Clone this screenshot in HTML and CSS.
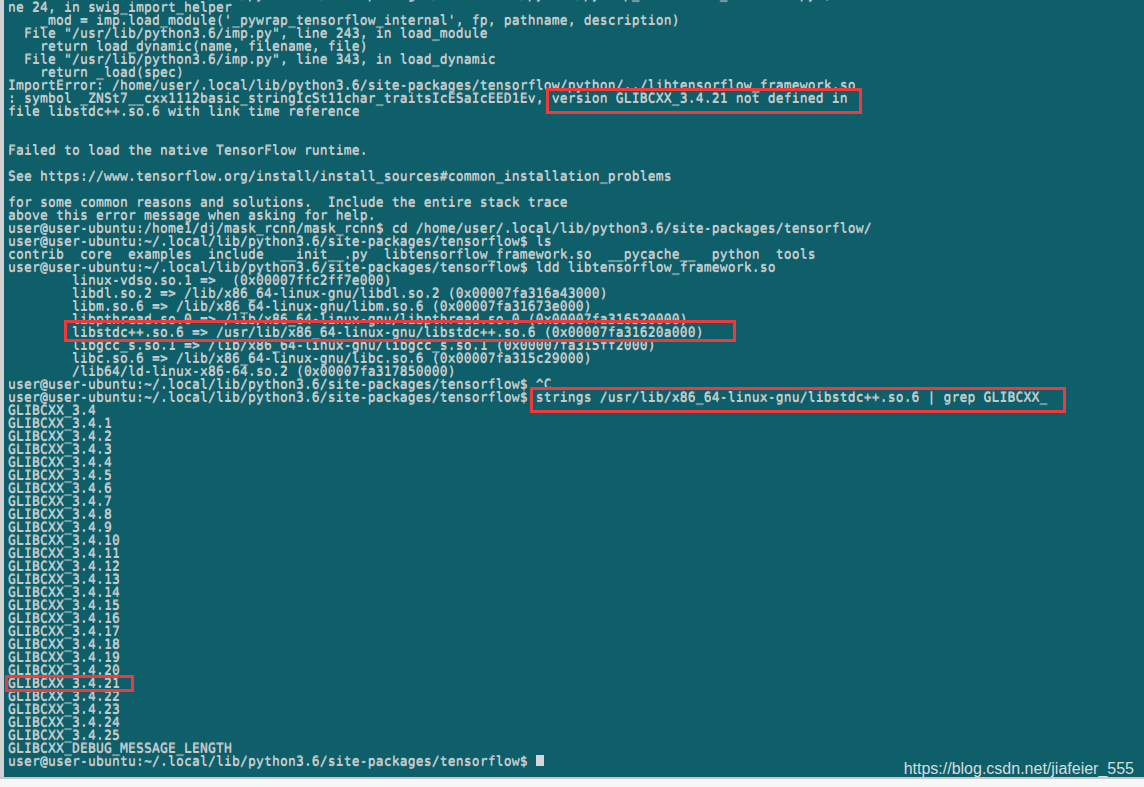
FILE: index.html
```html
<!DOCTYPE html>
<html lang="en">
<head>
  <meta charset="UTF-8">
  <meta name="viewport" content="width=device-width, initial-scale=1.0">
  <title>Terminal - GLIBCXX</title>
  <link rel="stylesheet" href="styles.css">
</head>
<body>

<div class="terminal">
  <div class="output">
    <div class="row">  File "/home/user/.local/lib/python3.6/site-packages/tensorflow/python/pywrap_tensorflow_internal.py", li</div>
    <div class="row">ne 24, in swig_import_helper</div>
    <div class="row">    _mod = imp.load_module('_pywrap_tensorflow_internal', fp, pathname, description)</div>
    <div class="row">  File "/usr/lib/python3.6/imp.py", line 243, in load_module</div>
    <div class="row">    return load_dynamic(name, filename, file)</div>
    <div class="row">  File "/usr/lib/python3.6/imp.py", line 343, in load_dynamic</div>
    <div class="row">    return _load(spec)</div>
    <div class="row">ImportError: /home/user/.local/lib/python3.6/site-packages/tensorflow/python/../libtensorflow_framework.so</div>
    <div class="row">: symbol _ZNSt7__cxx1112basic_stringIcSt11char_traitsIcESaIcEED1Ev, version GLIBCXX_3.4.21 not defined in</div>
    <div class="row">file libstdc++.so.6 with link time reference</div>
    <div class="row"></div>
    <div class="row"></div>
    <div class="row">Failed to load the native TensorFlow runtime.</div>
    <div class="row"></div>
    <div class="row">See https://www.tensorflow.org/install/install_sources#common_installation_problems</div>
    <div class="row"></div>
    <div class="row">for some common reasons and solutions.  Include the entire stack trace</div>
    <div class="row">above this error message when asking for help.</div>
    <div class="row">user@user-ubuntu:/home1/dj/mask_rcnn/mask_rcnn$ cd /home/user/.local/lib/python3.6/site-packages/tensorflow/</div>
    <div class="row">user@user-ubuntu:~/.local/lib/python3.6/site-packages/tensorflow$ ls</div>
    <div class="row">contrib  core  examples  include  __init__.py  libtensorflow_framework.so  __pycache__  python  tools</div>
    <div class="row">user@user-ubuntu:~/.local/lib/python3.6/site-packages/tensorflow$ ldd libtensorflow_framework.so</div>
    <div class="row">        linux-vdso.so.1 =>  (0x00007ffc2ff7e000)</div>
    <div class="row">        libdl.so.2 => /lib/x86_64-linux-gnu/libdl.so.2 (0x00007fa316a43000)</div>
    <div class="row">        libm.so.6 => /lib/x86_64-linux-gnu/libm.so.6 (0x00007fa31673e000)</div>
    <div class="row">        libpthread.so.0 => /lib/x86_64-linux-gnu/libpthread.so.0 (0x00007fa316520000)</div>
    <div class="row">        libstdc++.so.6 => /usr/lib/x86_64-linux-gnu/libstdc++.so.6 (0x00007fa31620a000)</div>
    <div class="row">        libgcc_s.so.1 => /lib/x86_64-linux-gnu/libgcc_s.so.1 (0x00007fa315ff2000)</div>
    <div class="row">        libc.so.6 => /lib/x86_64-linux-gnu/libc.so.6 (0x00007fa315c29000)</div>
    <div class="row">        /lib64/ld-linux-x86-64.so.2 (0x00007fa317850000)</div>
    <div class="row">user@user-ubuntu:~/.local/lib/python3.6/site-packages/tensorflow$ ^C</div>
    <div class="row">user@user-ubuntu:~/.local/lib/python3.6/site-packages/tensorflow$ strings /usr/lib/x86_64-linux-gnu/libstdc++.so.6 | grep GLIBCXX_</div>
    <div class="row">GLIBCXX_3.4</div>
    <div class="row">GLIBCXX_3.4.1</div>
    <div class="row">GLIBCXX_3.4.2</div>
    <div class="row">GLIBCXX_3.4.3</div>
    <div class="row">GLIBCXX_3.4.4</div>
    <div class="row">GLIBCXX_3.4.5</div>
    <div class="row">GLIBCXX_3.4.6</div>
    <div class="row">GLIBCXX_3.4.7</div>
    <div class="row">GLIBCXX_3.4.8</div>
    <div class="row">GLIBCXX_3.4.9</div>
    <div class="row">GLIBCXX_3.4.10</div>
    <div class="row">GLIBCXX_3.4.11</div>
    <div class="row">GLIBCXX_3.4.12</div>
    <div class="row">GLIBCXX_3.4.13</div>
    <div class="row">GLIBCXX_3.4.14</div>
    <div class="row">GLIBCXX_3.4.15</div>
    <div class="row">GLIBCXX_3.4.16</div>
    <div class="row">GLIBCXX_3.4.17</div>
    <div class="row">GLIBCXX_3.4.18</div>
    <div class="row">GLIBCXX_3.4.19</div>
    <div class="row">GLIBCXX_3.4.20</div>
    <div class="row">GLIBCXX_3.4.21</div>
    <div class="row">GLIBCXX_3.4.22</div>
    <div class="row">GLIBCXX_3.4.23</div>
    <div class="row">GLIBCXX_3.4.24</div>
    <div class="row">GLIBCXX_3.4.25</div>
    <div class="row">GLIBCXX_DEBUG_MESSAGE_LENGTH</div>
    <div class="row">user@user-ubuntu:~/.local/lib/python3.6/site-packages/tensorflow$ <span class="cursor"></span></div>
  </div>

  <!-- marcações em vermelho por cima do terminal -->
  <div class="mark mark-version"></div>
  <div class="mark mark-libstdc"></div>
  <div class="mark mark-strings"></div>
  <div class="mark mark-glibcxx"></div>

  <span class="watermark">https://blog.csdn.net/jiafeier_555</span>
</div>
<div class="footer"></div>

</body>
</html>
```

FILE: styles.css
```css
body {
  margin: 0;
  padding: 0;
  background-color: #f3f3f3;
}
.terminal {
  display: flow-root;
  position: relative;
  height: 777px;
  background-color: #0e5f6a;
  border-left: 4px solid #d2d2d2;
}
.output {
  margin-top: -13.5px;
  padding-left: 4px;
  font-family: "DejaVu Sans Mono", monospace;
  font-size: 13px;
  letter-spacing: 0.17px;
  text-rendering: geometricPrecision;
  color: #c3caca;
  /* engrossa um pouco os "_" que ficavam quase invisíveis */
  text-shadow: 0 0.5px 0 #c3caca;
}
.row {
  height: 13px;
  white-space: pre;
}
.cursor {
  display: inline-block;
  width: 8px;
  height: 11px;
  vertical-align: -1px;
  background-color: #d4d8d8;
}
.mark {
  position: absolute;
  border: 3px solid #ee3a3a;
}
.mark-version {
  left: 542px;
  top: 88px;
  width: 310px;
  height: 20px;
}
.mark-libstdc {
  left: 60px;
  top: 320px;
  width: 666px;
  height: 16px;
}
.mark-strings {
  left: 526px;
  top: 387px;
  width: 530px;
  height: 20px;
}
.mark-glibcxx {
  left: 1px;
  top: 675px;
  width: 123px;
  height: 11px;
}
.watermark {
  position: absolute;
  right: 10px;
  bottom: -1px;
  font-family: "Liberation Sans", Arial, sans-serif;
  font-size: 16px;
  color: #d6dede;
}
.footer {
  height: 8px;
  border-top: 2px solid #c9c9c9;
  background-color: #f7f7f7;
}
```
